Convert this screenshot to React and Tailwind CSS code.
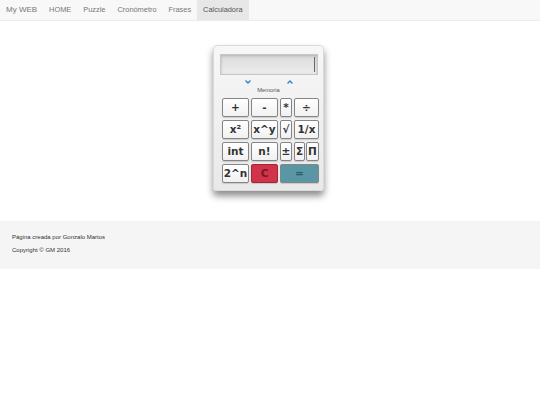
import React from 'react';

const navItems = ['HOME', 'Puzzle', 'Cronómetro', 'Frases', 'Calculadora'];

function Key({ label, w, className = '' }) {
  return (
    <button
      className={`h-[19px] ${w} rounded-[2px] border border-[#858585] bg-gradient-to-b from-white to-[#f1f1f1] text-[10.5px] font-bold leading-none text-[#333] shadow-[0_1px_1px_rgba(0,0,0,0.15)] flex items-center justify-center ${className}`}
      style={{ fontFamily: '"DejaVu Sans", sans-serif' }}
    >
      {label}
    </button>
  );
}

function Calculator() {
  return (
    <div className="w-[111px] h-[146px] rounded-[4px] bg-gradient-to-b from-[#f7f7f7] to-[#e9e9e9] border border-[#dadada] shadow-[0_5px_7px_rgba(0,0,0,0.45)] pt-[8px]">
      <div className="ml-[6px] w-[98px] h-[21px] border border-[#c8c8c8] bg-gradient-to-b from-[#dcdcdc] to-[#ececec] shadow-[inset_0_1px_3px_rgba(0,0,0,0.2)] flex items-center justify-end pr-[2px]">
        <div className="w-[1px] h-[15px] bg-[#666]" />
      </div>
      <div className="flex justify-center gap-[36px] mt-[3px] h-[7px] items-center">
        <svg width="6" height="4" viewBox="0 0 6 4"><path d="M0.5 0.5 L3 3 L5.5 0.5" fill="none" stroke="#3a80c4" strokeWidth="1.4" /></svg>
        <svg width="6" height="4" viewBox="0 0 6 4"><path d="M0.5 3.5 L3 1 L5.5 3.5" fill="none" stroke="#3a80c4" strokeWidth="1.4" /></svg>
      </div>
      <div className="text-center text-[5.8px] text-[#555] leading-none mt-[3px]" style={{ fontFamily: '"Liberation Sans", sans-serif' }}>Memoria</div>
      <div className="ml-[8px] mt-[4px] flex flex-col gap-[3px]">
        <div className="flex gap-[2px]">
          <Key label="+" w="w-[27px]" />
          <Key label="-" w="w-[27px]" />
          <Key label="*" w="w-[12px]" />
          <Key label="÷" w="w-[25px]" />
        </div>
        <div className="flex gap-[2px]">
          <Key label="x²" w="w-[27px]" />
          <Key label="x^y" w="w-[27px]" />
          <Key label="√" w="w-[12px]" />
          <Key label="1/x" w="w-[25px]" />
        </div>
        <div className="flex gap-[2px]">
          <Key label="int" w="w-[27px]" />
          <Key label="n!" w="w-[27px]" />
          <Key label="±" w="w-[12px]" />
          <Key label="Σ" w="w-[11px]" className="-mr-[1px]" />
          <Key label="Π" w="w-[13px]" />
        </div>
        <div className="flex gap-[2px]">
          <Key label="2^n" w="w-[27px]" />
          <Key label="C" w="w-[27px]" className="!bg-none !bg-[#d1334b] !text-[#7c1524] border-[#a02638]" />
          <Key label="=" w="w-[39px]" className="!bg-none !bg-[#5a97a5] !text-[#2d5a66] border-[#477985]" />
        </div>
      </div>
    </div>
  );
}

export default function App() {
  return (
    <div className="min-h-[405px] bg-white" style={{ fontFamily: '"Liberation Sans", Arial, sans-serif' }}>
      <nav className="h-[21px] bg-[#f8f8f8] border-b border-[#ececec] flex items-stretch">
        <div className="px-[6px] flex items-center text-[8px] text-[#777]">My WEB</div>
        {navItems.map((item) => (
          <div
            key={item}
            className={`px-[6px] flex items-center text-[7.4px] ${item === 'Calculadora' ? 'bg-[#e7e7e7] text-[#555]' : 'text-[#777]'}`}
          >
            {item}
          </div>
        ))}
      </nav>
      <main className="pt-[24px] pb-[30px] flex justify-center pr-[3px]">
        <Calculator />
      </main>
      <footer className="h-[48px] bg-[#f5f5f5] pl-[12px] pt-[13px] text-[6px] text-[#333] leading-none">
        <p>Página creada por Gonzalo Martos</p>
        <p className="mt-[7px]">Copyright © GM 2016</p>
      </footer>
    </div>
  );
}
